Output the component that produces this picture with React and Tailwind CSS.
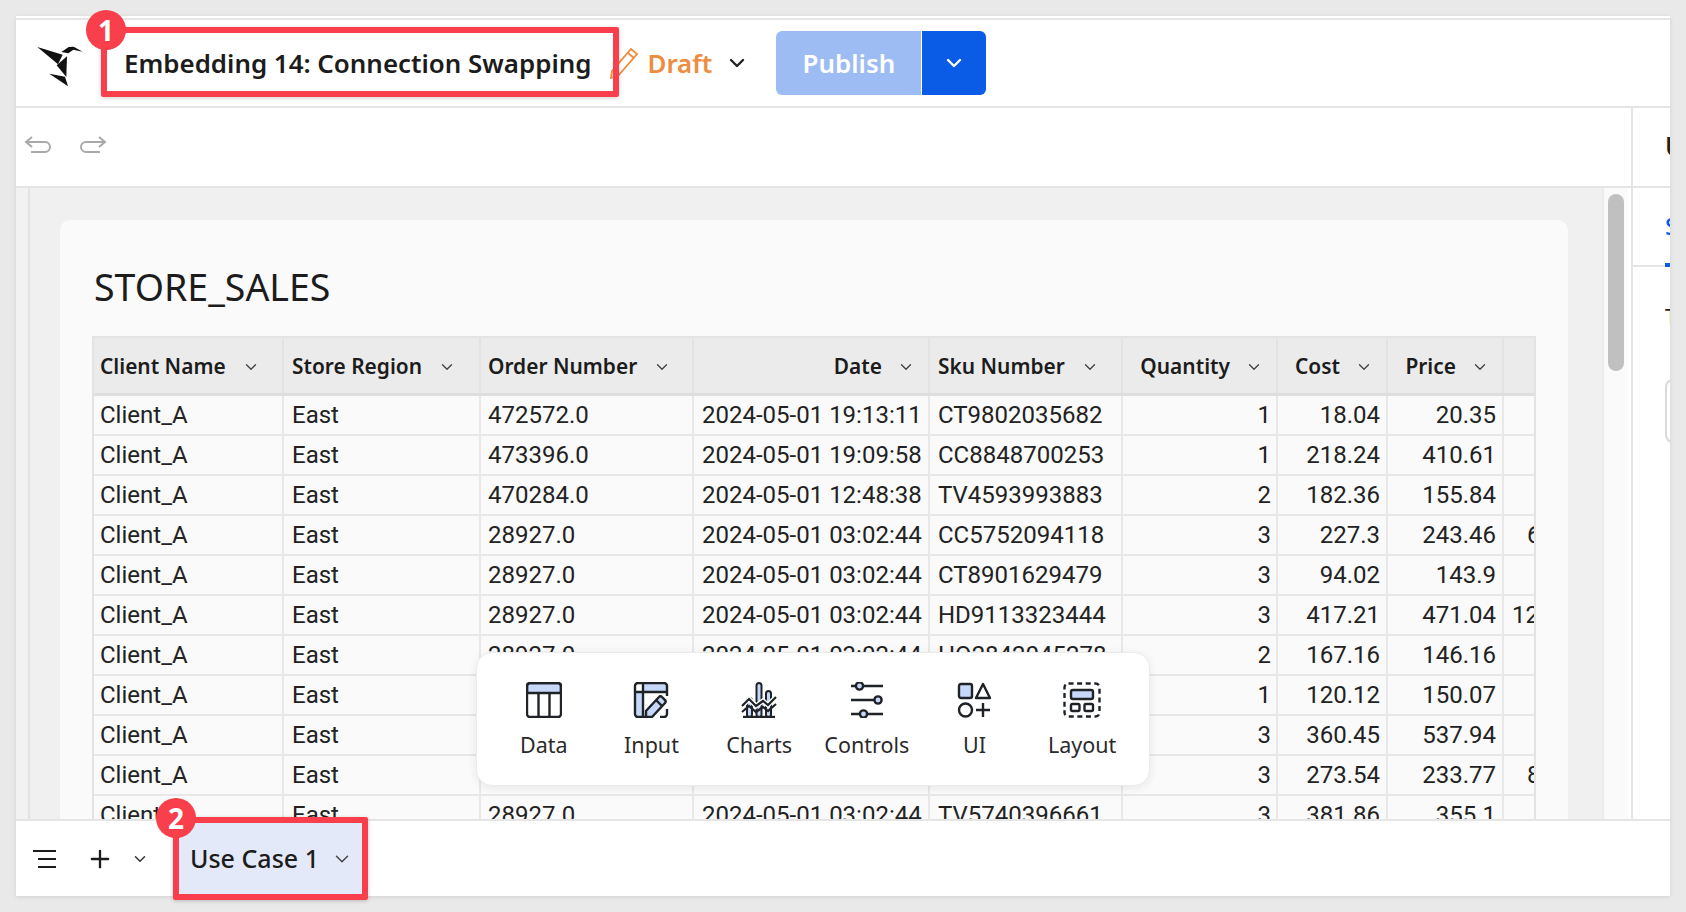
import { ChevronDown, Plus } from "lucide-react";

const NOTO = "font-['Noto_Sans',sans-serif]";
const COLS = "grid grid-cols-[190px_197px_213px_236px_193px_155px_110px_116px_30px]";
const INK = "#1f2328";
const TINT = "#c6d7f9";

const headers = [
  { label: "Client Name", right: false },
  { label: "Store Region", right: false },
  { label: "Order Number", right: false },
  { label: "Date", right: true },
  { label: "Sku Number", right: false },
  { label: "Quantity", right: true },
  { label: "Cost", right: true },
  { label: "Price", right: true },
];

const rows = [
  ["472572.0", "2024-05-01 19:13:11", "CT9802035682", "1", "18.04", "20.35", ""],
  ["473396.0", "2024-05-01 19:09:58", "CC8848700253", "1", "218.24", "410.61", ""],
  ["470284.0", "2024-05-01 12:48:38", "TV4593993883", "2", "182.36", "155.84", ""],
  ["28927.0", "2024-05-01 03:02:44", "CC5752094118", "3", "227.3", "243.46", "6"],
  ["28927.0", "2024-05-01 03:02:44", "CT8901629479", "3", "94.02", "143.9", ""],
  ["28927.0", "2024-05-01 03:02:44", "HD9113323444", "3", "417.21", "471.04", "12"],
  ["28927.0", "2024-05-01 03:02:44", "HQ2842045278", "2", "167.16", "146.16", ""],
  ["28927.0", "2024-05-01 03:02:44", "TV1190475523", "1", "120.12", "150.07", ""],
  ["28927.0", "2024-05-01 03:02:44", "CC6630192874", "3", "360.45", "537.94", ""],
  ["28927.0", "2024-05-01 03:02:44", "CT2217640935", "3", "273.54", "233.77", "8"],
  ["28927.0", "2024-05-01 03:02:44", "TV5740396661", "3", "381.86", "355.1", ""],
];

function Logo() {
  return (
    <svg width="60" height="55" viewBox="0 0 180 165" fill="#111">
      <polygon points="22,30 98,53 84,82" />
      <polygon points="94,45 116,30 131,29 158,44 130,38 115,49" />
      <polygon points="111,58 109,120 80,85" />
      <polygon points="58,110 105,119 114,148" />
    </svg>
  );
}

function Pencil() {
  return (
    <svg width="30" height="32" viewBox="0 0 30 32" fill="none" stroke="#ee8c40" strokeWidth="1.8">
      <path d="M22 2 L28 7 L9 29 L2 31 L3 24 Z" />
      <path d="M19 6 L25 11" />
    </svg>
  );
}

function Undo({ flip }) {
  return (
    <svg width="28" height="18" viewBox="0 0 28 18" fill="none" stroke="#a9a9a9" strokeWidth="2" className={flip ? "-scale-x-100" : ""}>
      <path d="M8 1 L2 6 L8 11 M2 6 H21 a5 5 0 0 1 0 10 H7" />
    </svg>
  );
}

function DataIcon() {
  return (
    <svg width="36" height="36" viewBox="0 0 36 36" fill="none" stroke={INK} strokeWidth="2.4">
      <path d="M1 11 V4 a3 3 0 0 1 3 -3 H32 a3 3 0 0 1 3 3 V11 Z" fill={TINT} />
      <rect x="1" y="1" width="34" height="34" rx="3" />
      <path d="M12.5 11 V35 M23.5 11 V35" />
    </svg>
  );
}

function InputIcon() {
  return (
    <svg width="36" height="36" viewBox="0 0 36 36" fill="none" stroke={INK} strokeWidth="2.4">
      <rect x="2" y="10" width="8" height="25" fill={TINT} stroke="none" />
      <rect x="10" y="2" width="24" height="8" fill={TINT} stroke="none" />
      <path d="M12 35 H5 a3 3 0 0 1 -3 -3 V4 a3 3 0 0 1 3 -3 H31 a3 3 0 0 1 3 3 V14" />
      <path d="M2 10 H34 M10 1 V35" />
      <path d="M34 27 V32 a3 3 0 0 1 -3 3 H27" />
      <path d="M13 35 V29 L26 15 a2 2 0 0 1 3 0 L32 18 a2 2 0 0 1 0 3 L19 35 Z" fill={TINT} />
      <path d="M23 18 L29 24" />
    </svg>
  );
}

function ChartsIcon() {
  return (
    <svg width="36" height="36" viewBox="0 0 36 36" fill="none" stroke={INK} strokeWidth="2">
      <rect x="6" y="16" width="5" height="19" rx="2.5" fill={TINT} />
      <rect x="15.5" y="1" width="5" height="34" rx="2.5" fill={TINT} />
      <rect x="25" y="9" width="5" height="26" rx="2.5" fill={TINT} />
      <path d="M1 24 L8 17 L15 24 L22 19 L27 23 L35 15" stroke="#fff" strokeWidth="5" />
      <path d="M1 24 L8 17 L15 24 L22 19 L27 23 L35 15" strokeWidth="2.2" />
      <path d="M1 30 L8 24 L15 30 L22 25 L27 29 L35 22" strokeWidth="2.2" />
      <path d="M2 35 H34" strokeWidth="2.4" />
    </svg>
  );
}

function ControlsIcon() {
  return (
    <svg width="36" height="36" viewBox="0 0 36 36" fill="none" stroke={INK} strokeWidth="2.4">
      <path d="M2 4 H6 M15 4 H34 M2 18 H25 M2 32 H10 M19 32 H34" />
      <circle cx="10.5" cy="4" r="3.6" fill={TINT} />
      <circle cx="29" cy="18" r="3.6" fill={TINT} />
      <circle cx="14.5" cy="32" r="3.6" fill={TINT} />
    </svg>
  );
}

function UiIcon() {
  return (
    <svg width="36" height="36" viewBox="0 0 36 36" fill="none" stroke={INK} strokeWidth="2.4">
      <rect x="3" y="2" width="13" height="14" rx="2" fill={TINT} />
      <path d="M27 2 L34 16 H20 Z" strokeLinejoin="round" />
      <circle cx="9.5" cy="28" r="6.5" />
      <path d="M27 21 V35 M20 28 H34" />
    </svg>
  );
}

function LayoutIcon() {
  return (
    <svg width="38" height="36" viewBox="0 0 38 36" fill="none" stroke={INK} strokeWidth="2.4">
      <rect x="1.5" y="1.5" width="35" height="33" rx="4" strokeDasharray="5 3.6" />
      <rect x="8" y="8" width="22" height="9" rx="2" fill={TINT} />
      <rect x="8" y="22" width="8.5" height="7" rx="1.5" />
      <rect x="21.5" y="22" width="8.5" height="7" rx="1.5" />
    </svg>
  );
}

const tools = [
  { label: "Data", Icon: DataIcon },
  { label: "Input", Icon: InputIcon },
  { label: "Charts", Icon: ChartsIcon },
  { label: "Controls", Icon: ControlsIcon },
  { label: "UI", Icon: UiIcon },
  { label: "Layout", Icon: LayoutIcon },
];

function Badge({ n, className }) {
  return (
    <div className={`absolute w-10 h-10 rounded-full bg-[#f93e4c] text-white grid place-items-center text-[28px] font-bold leading-none ${className}`}>
      {n}
    </div>
  );
}

function StoreTable() {
  return (
    <div className="w-[1444px] overflow-hidden border-l-2 border-t-2 border-r-2 border-[#e3e3e3] font-['Roboto',sans-serif] text-[24px] text-[#222]">
      <div className={`${COLS} h-[58px] bg-[#ebebeb] border-b-[3px] border-[#dedede] ${NOTO} text-[20.9px] font-semibold text-[#1c1c1c]`}>
        {headers.map((h, i) => (
          <div
            key={h.label}
            className={`flex items-center pt-[2px] border-r-2 border-[#e3e3e3] ${h.right ? "justify-end pr-[13px]" : i === 0 ? "pl-[6px]" : i === 2 ? "pl-[7px]" : "pl-2"}`}
          >
            <span>{h.label}</span>
            <ChevronDown size={18} strokeWidth={1.8} className={`text-[#444] ${h.right ? "ml-[15px]" : "ml-4"}`} />
          </div>
        ))}
        <div />
      </div>
      {rows.map((r, i) => (
        <div key={i} className={`${COLS} h-10 border-b-2 border-[#e8e8e8] leading-[38px] whitespace-nowrap`}>
          <div className="pl-[6px] border-r-2 border-[#e8e8e8]">Client_A</div>
          <div className="pl-2 border-r-2 border-[#e8e8e8]">East</div>
          <div className="pl-[7px] border-r-2 border-[#e8e8e8]">{r[0]}</div>
          <div className="pl-2 border-r-2 border-[#e8e8e8]">{r[1]}</div>
          <div className="pl-2 border-r-2 border-[#e8e8e8]">{r[2]}</div>
          <div className="pr-[5px] text-right border-r-2 border-[#e8e8e8]">{r[3]}</div>
          <div className="pr-[6px] text-right border-r-2 border-[#e8e8e8]">{r[4]}</div>
          <div className="pr-[6px] text-right border-r-2 border-[#e8e8e8]">{r[5]}</div>
          <div className={`overflow-hidden ${r[6].length > 1 ? "pl-2" : "pl-[23px]"}`}>{r[6]}</div>
        </div>
      ))}
    </div>
  );
}

export default function App() {
  return (
    <div className={`relative w-[1686px] h-[912px] overflow-hidden bg-[#e9e9e9] p-4 ${NOTO}`}>
      <div className="flex flex-col h-[880px] bg-white shadow-[0_1px_4px_rgba(0,0,0,0.1)]">
        <div className="h-[2px] bg-white" />
        <div className="h-[2px] bg-[#e6e6e6]" />

        <header className="flex items-center h-[88px] shrink-0 border-b-2 border-[#e5e5e5]">
          <div className="ml-[14px] mt-[2px] w-[60px]">
            <Logo />
          </div>
          <div className="ml-[34px] text-[25.9px] font-semibold text-[#1c1c1c] whitespace-nowrap">Embedding 14: Connection Swapping</div>
          <div className="ml-[18px]">
            <Pencil />
          </div>
          <div className="ml-[8px] text-[25.9px] font-semibold text-[#ee8c40]">Draft</div>
          <ChevronDown size={24} strokeWidth={2.4} className="ml-[13px] text-[#222]" />
          <div className="ml-[27px] flex h-16 rounded-[6px] overflow-hidden text-[25.9px] font-semibold text-white">
            <div className="w-[145px] bg-[#9dbcf3] grid place-items-center">Publish</div>
            <div className="w-16 ml-[1px] bg-[#0a5ce6] grid place-items-center">
              <ChevronDown size={24} strokeWidth={2.4} />
            </div>
          </div>
        </header>

        <div className="flex h-[80px] shrink-0 border-b-2 border-[#e5e5e5]">
          <div className="flex-1 flex items-center gap-[27px] pl-2 pb-1">
            <Undo />
            <Undo flip />
          </div>
          <div className="w-[39px] border-l-2 border-[#e5e5e5] pl-[32px] overflow-hidden font-bold text-[26px] text-[#222] leading-[76px]">U</div>
        </div>

        <div className="flex flex-1 min-h-0">
          <div className="w-[14px] shrink-0 bg-[#f2f2f2] border-r-2 border-[#e3e3e3]" />
          <div className="w-[1572px] shrink-0 bg-[#f0f0f0] pt-8 pl-[30px] overflow-hidden">
            <div className="w-[1508px] h-[800px] bg-[#fafafa] rounded-t-[10px] pt-[42px] pl-8">
              <h1 className="text-[37.5px] leading-[50px] text-[#1c1c1c] mb-[24px] ml-[2px]">STORE_SALES</h1>
              <StoreTable />
            </div>
          </div>
          <div className="w-[26px] shrink-0 bg-[#fafafa] border-l-2 border-[#ebebeb] pt-[6px] pl-[4px]">
            <div className="w-4 h-[177px] rounded-full bg-[#c0c0c0]" />
          </div>
          <div className="w-[3px] shrink-0 bg-white" />
          <div className="flex-1 border-l-2 border-[#e5e5e5] overflow-hidden">
            <div className="relative h-[79px] border-b-2 border-[#e5e5e5] pl-[32px] pt-[22px] text-[24px] font-medium text-[#0a5ce6] leading-[32px]">
              S
              <div className="absolute left-[32px] bottom-[-2px] w-[8px] h-[4px] bg-[#0a5ce6]" />
            </div>
            <div className="pl-[32px] pt-[34px] text-[22px] text-[#222] leading-[30px]">T</div>
            <div className="ml-[32px] mt-[48px] w-20 h-[64px] rounded-[8px] border-2 border-[#d9d9d9]" />
          </div>
        </div>

        <footer className="flex items-center h-[77px] shrink-0 bg-white border-t-2 border-[#e5e5e5]">
          <div className="ml-[17px] w-[23px] flex flex-col gap-[6px] items-end">
            <div className="w-full h-[2px] bg-[#1c1c1c]" />
            <div className="w-[18px] h-[2px] bg-[#1c1c1c]" />
            <div className="w-[18px] h-[2px] bg-[#1c1c1c]" />
          </div>
          <Plus size={28} strokeWidth={2} className="ml-[30px] text-[#1c1c1c]" />
          <ChevronDown size={18} strokeWidth={2} className="ml-[17px] text-[#333]" />
          <div className="ml-[29px] h-[74px] w-[185px] shrink-0 bg-[#e3e9f8] flex items-center pl-3 text-[25px] font-medium text-[#1c1c1c] whitespace-nowrap">
            Use Case 1
            <ChevronDown size={22} strokeWidth={1.6} className="ml-3 text-[#444]" />
          </div>
        </footer>
      </div>

      <div className="absolute left-[476px] top-[652px] w-[674px] h-[134px] rounded-[16px] bg-white border border-[#ececec] shadow-[0_2px_10px_rgba(0,0,0,0.08)] grid grid-cols-6 px-[13px] pt-[29px]">
        {tools.map(({ label, Icon }) => (
          <div key={label} className="flex flex-col items-center">
            <Icon />
            <div className="mt-3 text-[21.5px] leading-[30px] text-[#2a2a2a]">{label}</div>
          </div>
        ))}
      </div>

      <div className="absolute left-[101px] top-[27px] w-[518px] h-[70px] border-[6px] border-[#f93e4c] rounded-[2px] shadow-[0_1px_4px_rgba(0,0,0,0.2)]" />
      <Badge n="1" className="left-[86px] top-[10px]" />
      <div className="absolute left-[173px] top-[817px] w-[195px] h-[83px] border-[6px] border-[#f93e4c] rounded-[2px] shadow-[0_1px_4px_rgba(0,0,0,0.2)]" />
      <Badge n="2" className="left-[156px] top-[798px]" />
    </div>
  );
}
